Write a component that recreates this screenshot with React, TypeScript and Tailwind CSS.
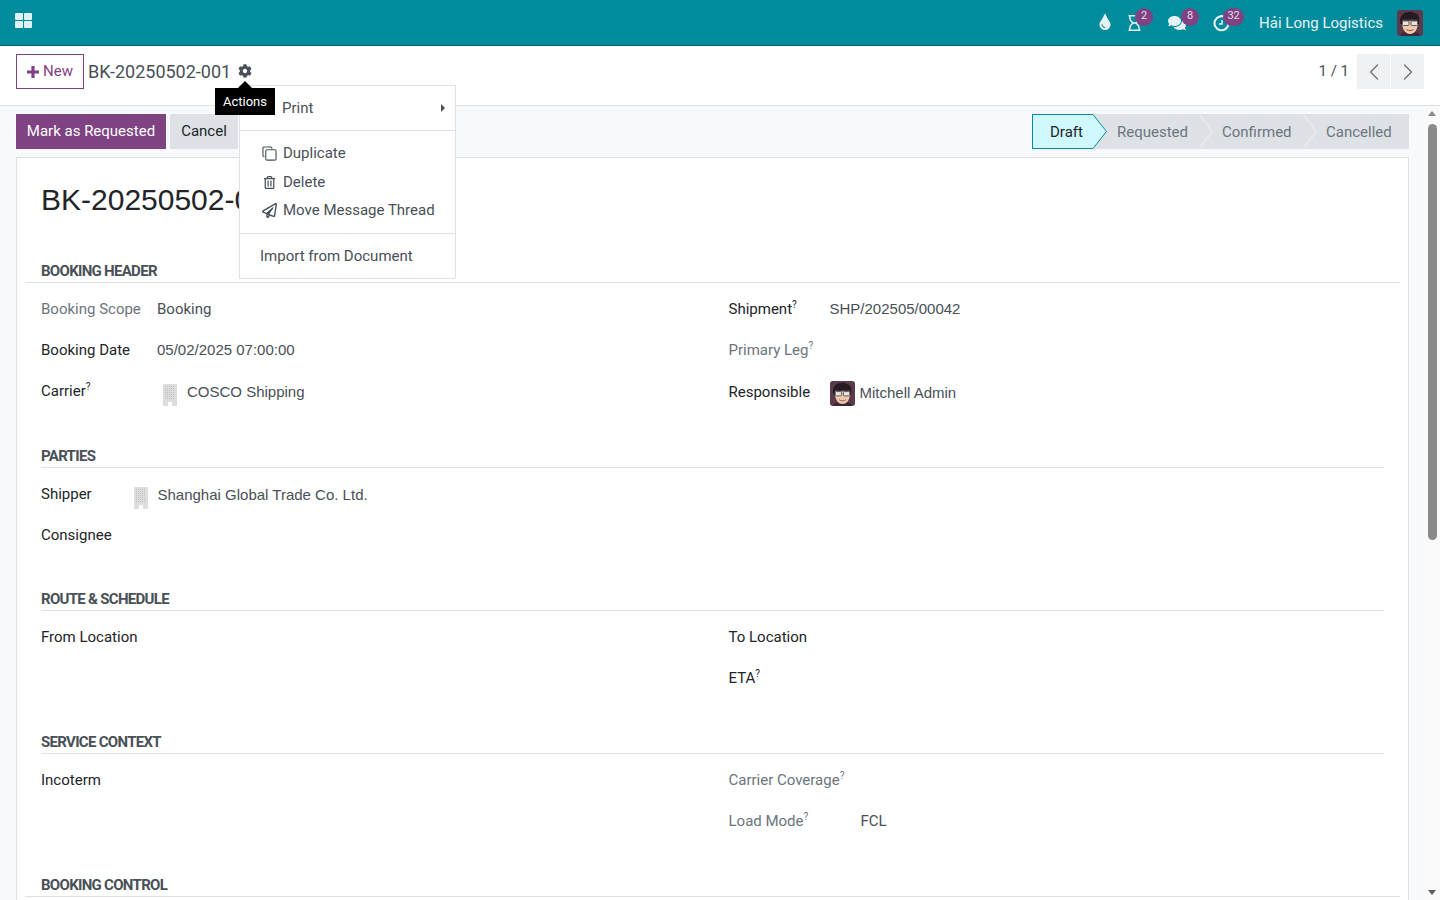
import { ChevronLeft, ChevronRight } from "lucide-react";
import { FaCog, FaComments, FaRegHourglass, FaRegPaperPlane, FaRegTrashAlt, FaTint } from "react-icons/fa";
import type { ReactNode } from "react";

function Avatar({ size }: { size: string }) {
    return (
        <svg viewBox="0 0 26 26" className={size}>
            <rect width="26" height="26" rx="3" fill="#5b3a4c" />
            <path d="M3 26c1-3 3-4 6-4h8c3 0 5 1 6 4z" fill="#3d2734" />
            <path d="M5 11c0 8 3 13 8 13s8-5 8-13z" fill="#f0c8ac" />
            <path d="M3.500 14C2 7 5 2 12 2c2-.5 4 0 5 1 4 0 6 4 5 11l-1.500 0-.5-5c-2 1-4 1-6 0-2 1-6 1-8.500 0l-.5 5z" fill="#241c20" />
            <rect x="5.500" y="11" width="6.500" height="4.500" rx="1" fill="#e9e4df" stroke="#5a5a5a" strokeWidth="1" />
            <rect x="14" y="11" width="6.500" height="4.500" rx="1" fill="#e9e4df" stroke="#5a5a5a" strokeWidth="1" />
            <path d="M9.500 19.500c2 1.500 5 1.500 7 0" stroke="#8a5a4a" strokeWidth="1" fill="none" />
        </svg>
    );
}

function Building() {
    return (
        <svg viewBox="0 0 14 22" className="w-[14px] h-[22px] shrink-0 mt-[6px]">
            <path d="M0 0h14v22H9v-4H5v4H0z" fill="#dedede" />
            <path d="M2 2.500h10M2 4.500h10M2 6.500h10M2 8.500h10M2 10.500h10M2 12.500h10M2 14.500h10" stroke="#bfbfbf" strokeWidth="1" strokeDasharray="1 1" shapeRendering="crispEdges" />
        </svg>
    );
}

function Badge({ n, className }: { n: string; className: string }) {
    return (
        <span className={`absolute top-[-7px] h-[18px] rounded-full bg-[#7f4282] text-[#e8dcea] text-[11px] leading-[16px] text-center ${className}`}>
            {n}
        </span>
    );
}

function Nav() {
    return (
        <div className="h-[46px] shrink-0 bg-[#008c9c] border-b border-[#03606b] flex items-center text-[#e6f3f5]">
            <svg viewBox="0 0 17 15" className="w-[17px] h-[15px] ml-[15px] mb-[5px]" fill="#e0f1f3">
                <rect width="8" height="7" rx="1" />
                <rect x="9" width="8" height="7" rx="1" />
                <rect y="8" width="8" height="7" rx="1" />
                <rect x="9" y="8" width="8" height="7" rx="1" />
            </svg>
            <div className="ml-auto flex items-center">
                <FaTint className="w-[14px] h-[16px] mr-[16px] mt-[-2px]" />
                <div className="relative mr-[26px] mt-[-2px] h-[14px]">
                    <FaRegHourglass className="w-[13px] h-[16px] block" />
                    <Badge n="2" className="w-[18px] left-[7px]" />
                </div>
                <div className="relative mr-[26px] mt-[-2px] h-[14px]">
                    <FaComments className="w-[20px] h-[16px] block" />
                    <Badge n="8" className="w-[18px] left-[14px]" />
                </div>
                <div className="relative mr-[29px] mt-[-2px] h-[14px]">
                    <svg viewBox="0 0 17 17" className="w-[17px] h-[17px] block" fill="none" stroke="#e6f3f5" strokeWidth="2.200">
                        <path d="M12.500 2.500A7 7 0 1 0 15.500 8.500" />
                        <path d="M9 5v4H6" strokeWidth="1.500" />
                    </svg>
                    <Badge n="32" className="w-[21px] left-[10px]" />
                </div>
                <span className="text-[15px] leading-none mt-[1px] mr-[14px]">Hải Long Logistics</span>
                <Avatar size="w-[26px] h-[26px] mr-[17px]" />
            </div>
        </div>
    );
}

function ControlPanel() {
    return (
        <div className="h-[60px] shrink-0 bg-white border-b border-[#dee2e6] flex items-start pt-[8px] px-[16px]">
            <button className="h-[35px] w-[68px] border border-[#7f4282] text-[#7f4282] text-[15px] flex items-center justify-center gap-[4px] bg-white">
                <svg viewBox="0 0 12 12" className="w-[12px] h-[12px]" stroke="#7f4282" strokeWidth="3.200">
                    <path d="M0 6h12M6 0v12" />
                </svg>
                New
            </button>
            <span className="ml-[4px] text-[18px] leading-[35px] text-[#495057]">BK-20250502-001</span>
            <FaCog className="ml-[7px] mt-[10px] w-[14px] h-[14px] text-[#495057]" />
            <span className="ml-auto text-[15px] leading-[35px] text-[#495057] mr-[8px]">1 / 1</span>
            <div className="flex gap-px">
                <div className="w-[33px] h-[35px] bg-[#f0f1f2] flex items-center justify-center">
                    <ChevronLeft className="w-[28px] h-[28px] text-[#6c757d]" strokeWidth={1.200} />
                </div>
                <div className="w-[33px] h-[35px] bg-[#f0f1f2] flex items-center justify-center">
                    <ChevronRight className="w-[28px] h-[28px] text-[#6c757d]" strokeWidth={1.200} />
                </div>
            </div>
        </div>
    );
}

function StatusStep({ label, w, pl }: { label: string; w: string; pl: string }) {
    return <div className={`h-[35px] flex items-center pt-[2px] text-[15px] text-[#6c757d] ${w} ${pl}`}>{label}</div>;
}

function Separator() {
    return (
        <svg viewBox="0 0 14 35" className="w-[14px] h-[35px]">
            <path d="M0 0L13.500 17.500L0 35" fill="none" stroke="#f0f1f2" />
        </svg>
    );
}

function StatusBar() {
    return (
        <div className="flex bg-[#dee2e6] h-[35px]">
            <div className="w-[61px] h-[35px] bg-[#cff9fe] border border-r-0 border-[#008c9c] text-[15px] text-[#212529] flex items-center pl-[17px] pt-[2px]">
                Draft
            </div>
            <svg viewBox="0 0 14 35" className="w-[14px] h-[35px]">
                <path d="M0 0L13.500 17.500L0 35z" fill="#cff9fe" />
                <path d="M0 .5L13.500 17.500L0 34.500" fill="none" stroke="#008c9c" />
            </svg>
            <StatusStep label="Requested" w="w-[92px]" pl="pl-[10px]" />
            <Separator />
            <StatusStep label="Confirmed" w="w-[90px]" pl="pl-[9px]" />
            <Separator />
            <StatusStep label="Cancelled" w="w-[92px]" pl="pl-[9px]" />
        </div>
    );
}

function Header({ title, wide }: { title: string; wide?: boolean }) {
    return (
        <div className={`h-[23px] border-b border-[#dee2e6] font-bold text-[15px] leading-[16px] tracking-[-0.7px] text-[#495057] pt-[3px] ${wide ? "-mx-[16px] px-[16px]" : ""}`}>
            {title}
        </div>
    );
}

function Help({ muted }: { muted?: boolean }) {
    return <sup className={`text-[10px] -top-[6px] ${muted ? "text-[#6c757d]" : "text-[#212529]"}`}>?</sup>;
}

function Row({ label, help, muted, lw, tall, raised, children }: { label: string; help?: boolean; muted?: boolean; lw: string; tall?: boolean; raised?: boolean; children?: ReactNode }) {
    return (
        <div className={`flex items-center text-[15px] ${tall ? "h-[42px]" : "h-[41px]"}`}>
            <div className={`${lw} shrink-0 ${raised ? "mb-[2px]" : ""} ${muted ? "text-[#6c757d]" : "text-[#212529] font-[450]"}`}>
                {label}
                {help && <Help muted={muted} />}
            </div>
            <div className="text-[#495057] flex items-center">{children}</div>
        </div>
    );
}

function Arial({ children, className }: { children: ReactNode; className?: string }) {
    return <span className={`font-['Liberation_Sans',sans-serif] ${className ?? ""}`}>{children}</span>;
}

function Section({ title, wide, left, right, className }: { title: string; wide?: boolean; left?: ReactNode; right?: ReactNode; className?: string }) {
    return (
        <div className={className}>
            <Header title={title} wide={wide} />
            <div className="grid grid-cols-2 pt-[6px]">
                <div>{left}</div>
                <div className="pl-[16px]">{right}</div>
            </div>
        </div>
    );
}

function Sheet() {
    return (
        <div className="mt-[8px] ml-[16px] w-[1393px] bg-white border border-[#dee2e6] px-[24px] pt-[24px] pb-[40px]">
            <div className="text-[30px] leading-[36px] text-[#212529] mb-[42px] font-['Liberation_Sans',sans-serif]">BK-20250502-001</div>
            <Section
                title="BOOKING HEADER"
                wide
                left={
                    <>
                        <Row label="Booking Scope" muted lw="w-[116px]">Booking</Row>
                        <Row label="Booking Date" lw="w-[116px]"><Arial>05/02/2025 07:00:00</Arial></Row>
                        <Row label="Carrier" help tall raised lw="w-[116px]">
                            <span className="ml-[6px] mr-[10px] flex"><Building /></span>
                            <Arial>COSCO Shipping</Arial>
                        </Row>
                    </>
                }
                right={
                    <>
                        <Row label="Shipment" help lw="w-[101px]"><Arial>SHP/202505/00042</Arial></Row>
                        <Row label="Primary Leg" help muted lw="w-[101px]" />
                        <Row label="Responsible" tall lw="w-[101px]">
                            <Avatar size="w-[25px] h-[25px] mr-[5px] mt-[2px]" />
                            <Arial className="mt-[2px]">Mitchell Admin</Arial>
                        </Row>
                    </>
                }
            />
            <Section
                title="PARTIES"
                className="mt-[32px]"
                left={
                    <>
                        <Row label="Shipper" lw="w-[93px]">
                            <span className="mr-[9.500px] flex"><Building /></span>
                            <Arial className="mt-[1px]">Shanghai Global Trade Co. Ltd.</Arial>
                        </Row>
                        <Row label="Consignee" lw="w-[93px]" />
                    </>
                }
            />
            <Section
                title="ROUTE & SCHEDULE"
                className="mt-[32px]"
                left={<Row label="From Location" lw="w-[116px]" />}
                right={
                    <>
                        <Row label="To Location" lw="w-[101px]" />
                        <Row label="ETA" help lw="w-[101px]" />
                    </>
                }
            />
            <Section
                title="SERVICE CONTEXT"
                className="mt-[32px]"
                left={<Row label="Incoterm" lw="w-[116px]" />}
                right={
                    <>
                        <Row label="Carrier Coverage" help muted lw="w-[132px]" />
                        <Row label="Load Mode" help muted lw="w-[132px]">FCL</Row>
                    </>
                }
            />
            <Section title="BOOKING CONTROL" wide className="mt-[32px]" />
        </div>
    );
}

function ActionsMenu() {
    const items = [
        {
            label: "Duplicate",
            icon: (
                <svg viewBox="0 0 16 16" className="w-[15px] h-[15px]" fill="none" stroke="#495057" strokeWidth="1.200">
                    <path d="M10.500 3V2a1.500 1.500 0 0 0-1-1H2a1.500 1.500 0 0 0-1 1v8a1 1 0 0 0 1.500 1" />
                    <rect x="4" y="4" width="11" height="11" rx="1.500" />
                </svg>
            ),
            h: "h-[29px]",
        },
        {
            label: "Delete",
            icon: <FaRegTrashAlt className="w-[15px] h-[13px] text-[#495057]" />,
            h: "h-[29px]",
        },
        {
            label: "Move Message Thread",
            icon: <FaRegPaperPlane className="w-[15px] h-[15px] text-[#495057]" />,
            h: "h-[27px]",
        },
    ];
    return (
        <div className="absolute left-[239px] top-[85px] w-[217px] h-[194px] bg-white border border-[#dee2e6] text-[15px] text-[#495057] z-10">
            <div className="h-[45px] border-b border-[#dee2e6] flex items-center justify-between pl-[42px] pr-[10px]">
                <span className="mt-[1px]">Print</span>
                <span className="w-0 h-0 border-y-[4px] border-y-transparent border-l-[4px] border-l-[#495057]" />
            </div>
            <div className="h-[103px] border-b border-[#dee2e6] pt-[8px] pl-[22px]">
                {items.map((it) => (
                    <div key={it.label} className={`flex items-center gap-[6px] ${it.h}`}>
                        {it.icon}
                        {it.label}
                    </div>
                ))}
            </div>
            <div className="h-[44px] flex items-center pl-[20px]">Import from Document</div>
        </div>
    );
}

function ActionsTooltip() {
    return (
        <div className="absolute left-[215px] top-[88px] w-[60px] h-[27px] bg-black text-white text-[13px] flex items-center justify-center z-20">
            <span className="absolute -top-[7px] left-[23px] w-0 h-0 border-x-[7px] border-x-transparent border-b-[7px] border-b-black" />
            Actions
        </div>
    );
}

function ScrollTrack() {
    return (
        <div className="relative w-[15px] shrink-0 bg-[#fafafa]">
            <span className="absolute top-[5px] left-[3px] w-0 h-0 border-x-[4.500px] border-x-transparent border-b-[5px] border-b-[#8a8a8a]" />
            <div className="absolute top-[18px] left-[3px] w-[9px] h-[416px] rounded-full bg-[#8a8a8a]" />
            <span className="absolute bottom-[5px] left-[3px] w-0 h-0 border-x-[4.500px] border-x-transparent border-t-[5px] border-t-[#5f5f5f]" />
        </div>
    );
}

export default function App() {
    return (
        <div className="relative h-screen overflow-hidden flex flex-col bg-white font-['Roboto',sans-serif]">
            <Nav />
            <ControlPanel />
            <div className="flex-1 flex min-h-0 bg-[#f8f9fa]">
                <div className="flex-1 min-w-0 overflow-hidden">
                    <div className="flex justify-between pt-[8px] px-[16px]">
                        <div className="flex gap-[4px]">
                            <button className="h-[35px] w-[150px] bg-[#7f4282] text-white text-[15px]">Mark as Requested</button>
                            <button className="h-[35px] w-[68px] bg-[#dee2e6] text-[#212529] text-[15px]">Cancel</button>
                        </div>
                        <StatusBar />
                    </div>
                    <Sheet />
                </div>
                <ScrollTrack />
            </div>
            <ActionsMenu />
            <ActionsTooltip />
        </div>
    );
}
